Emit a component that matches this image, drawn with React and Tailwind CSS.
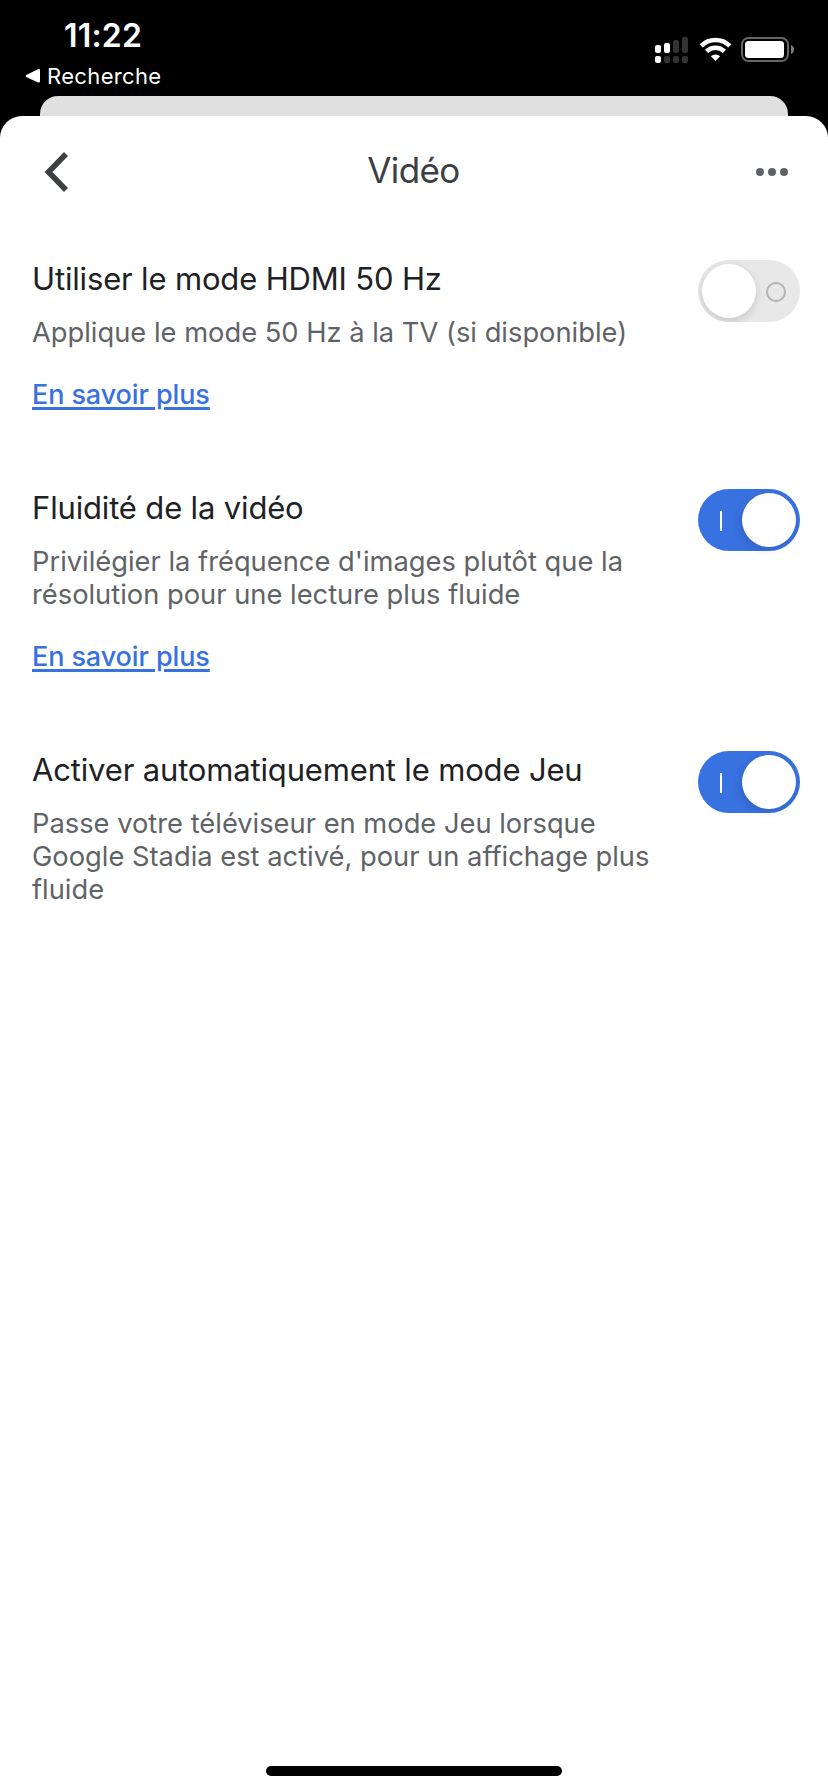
const SECTIONS = [
  {
    title: "Utiliser le mode HDMI 50 Hz",
    lines: ["Applique le mode 50 Hz à la TV (si disponible)"],
    link: true,
    on: false,
  },
  {
    title: "Fluidité de la vidéo",
    lines: ["Privilégier la fréquence d'images plutôt que la", "résolution pour une lecture plus fluide"],
    link: true,
    on: true,
  },
  {
    title: "Activer automatiquement le mode Jeu",
    lines: ["Passe votre téléviseur en mode Jeu lorsque", "Google Stadia est activé, pour un affichage plus", "fluide"],
    link: false,
    on: true,
  },
];

function StatusIcons() {
  return (
    <svg className="mt-9 h-7 w-[142px]" viewBox="654 36 142 28" fill="#fff">
      <rect x="655" y="45" width="6" height="8" rx="2" />
      <rect x="664" y="43" width="6" height="10" rx="2" />
      <rect x="673" y="40" width="6" height="13" rx="2" fill="#333" />
      <rect x="682" y="37" width="6" height="16" rx="2" fill="#333" />
      <rect x="655" y="56" width="6" height="7" rx="2" />
      <rect x="664" y="56" width="6" height="7" rx="2" fill="#333" />
      <rect x="673" y="56" width="6" height="7" rx="2" fill="#333" />
      <rect x="682" y="56" width="6" height="7" rx="2" fill="#333" />
      <g fill="none" stroke="#fff" strokeWidth="4.6">
        <path d="M701.2 45.8 A20.5 20.5 0 0 1 729.8 45.8" />
        <path d="M706.6 51.4 A12.6 12.6 0 0 1 724.4 51.4" />
      </g>
      <path d="M715.5 61 L710.9 56.3 A6.8 6.8 0 0 1 720.1 56.3 Z" />
      <rect x="742" y="38" width="46" height="23" rx="6.5" fill="none" stroke="#666" strokeWidth="2" />
      <rect x="745" y="41" width="39" height="17" rx="3.5" />
      <path d="M791 45 C795 46.5 795 52.5 791 54 Z" fill="#7c7c7c" />
    </svg>
  );
}

function Toggle({ on }) {
  return on ? (
    <div className="flex h-[62px] w-[102px] items-center justify-between rounded-full bg-[#3871e0] pr-1 pl-[22px]">
      <div className="mt-0.5 h-5 w-0.5 bg-white" />
      <div className="size-[54px] rounded-full bg-white shadow-[-2px_3px_8px_rgba(0,0,0,0.12)]" />
    </div>
  ) : (
    <div className="flex h-[62px] w-[102px] items-center justify-between overflow-hidden rounded-full bg-[#e8e8e8] pr-[14px] pl-1">
      <div className="size-[54px] rounded-full bg-white shadow-[0px_3px_8px_rgba(0,0,0,0.15)]" />
      <div className="mt-0.5 size-5 rounded-full border-2 border-[#b3b3b3]" />
    </div>
  );
}

export default function App() {
  return (
    <div className="flex h-[1792px] w-[828px] flex-col overflow-hidden bg-black font-['Inter',sans-serif]">
      <header className="flex h-24 justify-between pr-8 pl-[25px] text-white">
        <div>
          <div className="mt-4 ml-[39px] text-[32px] leading-10 font-semibold tracking-[0.2px]">11:22</div>
          <div className="mt-1 flex items-center gap-[7px]">
            <svg className="h-4 w-[15px]" viewBox="0 0 15 16" fill="#fff">
              <path d="M1.2 7 L13 1.2 Q15 .5 15 2.5 V13 Q15 15 13 14.4 L1.2 9 Q0 8 1.2 7Z" />
            </svg>
            <span className="text-[22px] leading-8 tracking-[0.35px]">Recherche</span>
          </div>
        </div>
        <StatusIcons />
      </header>
      <div className="mx-10 h-5 shrink-0 rounded-t-[18px] bg-[#e0e0e0]" />
      <main className="flex grow flex-col rounded-t-[22px] bg-white">
        <div className="flex h-28 items-center justify-between pr-10 pl-11">
          <svg className="h-10 w-6" viewBox="0 0 24 40" fill="none" stroke="#3c4043" strokeWidth="5.6">
            <path d="M22 2 L4.5 20 L22 38" />
          </svg>
          <h1 className="pb-1 pl-[3px] text-[35px] leading-10 tracking-[-0.6px] text-[#3c4043]">Vidéo</h1>
          <svg className="h-2 w-8" viewBox="0 0 32 8" fill="#5f6368">
            <circle cx="4" cy="4" r="4" />
            <circle cx="16" cy="4" r="4" />
            <circle cx="28" cy="4" r="4" />
          </svg>
        </div>
        <div className="flex flex-col gap-[77px] pt-8 pr-7 pl-8">
          {SECTIONS.map((s) => (
            <section key={s.title} className="flex items-start justify-between">
              <div className="whitespace-nowrap">
                <h2 className="text-[31px] leading-[38px] tracking-[-0.16px] text-[#202124]">{s.title}</h2>
                <p className="mt-[18px] text-[27.3px] leading-[33px] text-[#5f6368]">
                  {s.lines.map((line) => (
                    <span key={line} className="block">{line}</span>
                  ))}
                </p>
                {s.link && (
                  <a className="mt-[29px] block w-fit text-[27px] leading-[34px] font-medium tracking-[-0.1px] text-[#3871e0] underline decoration-[3px] underline-offset-[3px]">
                    En savoir plus
                  </a>
                )}
              </div>
              <Toggle on={s.on} />
            </section>
          ))}
        </div>
        <div className="mx-auto mt-auto mb-4 h-2.5 w-[296px] rounded-full bg-black" />
      </main>
    </div>
  );
}
